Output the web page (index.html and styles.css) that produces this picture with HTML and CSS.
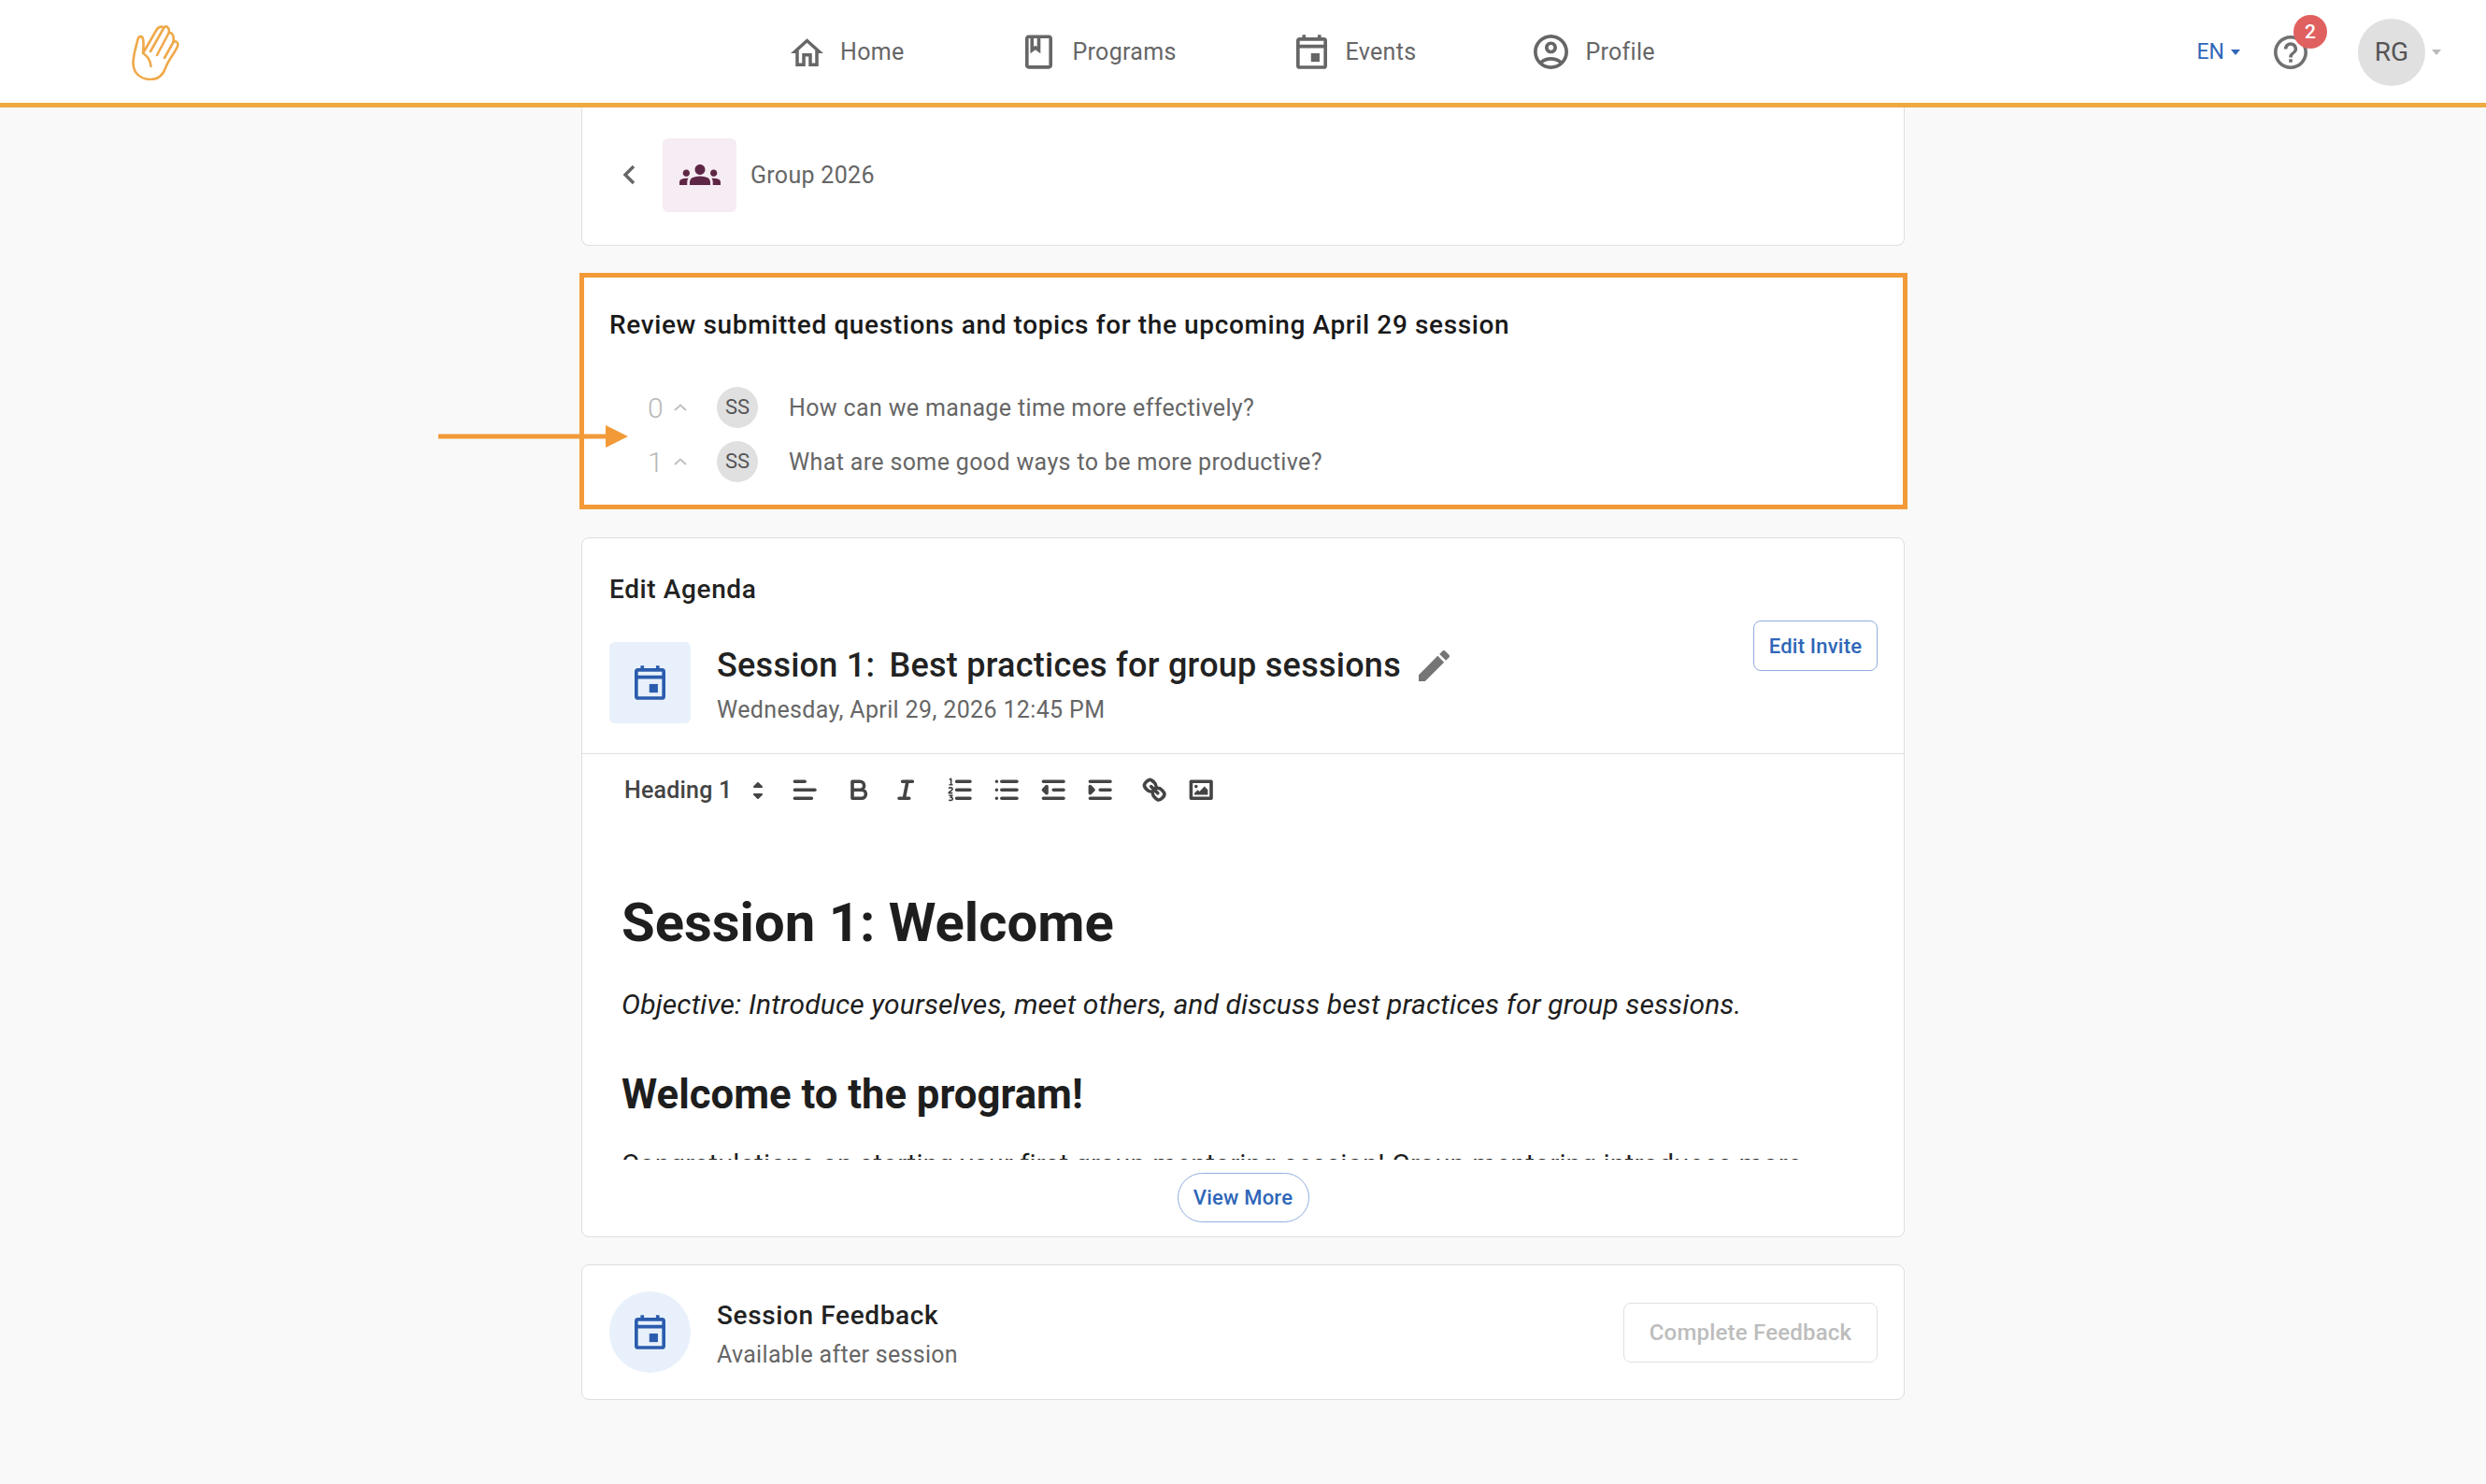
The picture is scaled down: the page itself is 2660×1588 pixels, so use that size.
FILE: index.html
```html
<!DOCTYPE html>
<html lang="en">
<head>
    <meta charset="UTF-8">
    <meta name="viewport" content="width=device-width, initial-scale=1.0">
    <title>Group 2026</title>
    <link rel="stylesheet" href="styles.css">
</head>
<body>
    <svg class="defs" width="0" height="0">
        <symbol id="cal" viewBox="3 1 18 20">
            <g fill="none" stroke="currentColor" stroke-width="2">
                <rect x="4" y="3.6" width="16" height="16.4" rx="1"/>
                <path d="M4 7.8h16M7.5 1v3M16.5 1v3"/>
            </g>
            <rect x="11.6" y="11.8" width="5" height="5" fill="currentColor"/>
        </symbol>
    </svg>

    <header class="topbar">
        <svg class="logo" viewBox="0 0 51 59" fill="none" stroke="currentColor" stroke-width="2.6" stroke-linecap="round" stroke-linejoin="round">
            <path d="M12 30C12.500 24 13 18 12 14.500C11 11 7.500 11.500 6.500 15C5 22 1.300 32 1.500 41C2 52 10 58 20 58C29 58 33.500 53 36 46C39 37 46 30 49 22.500C50.500 18 46 15.500 44 19L35 35M44 19C46 13 43.500 6.500 39.500 8.500L27 32M39.500 8.500C41 3 37 -0.500 34.500 2.500L20 28M34.500 2.500C31 0.500 28 2.500 26.500 5L12 30C17 33 20 38 20.500 44"/>
        </svg>
        <nav class="nav">
            <a class="nav-item">
                <svg class="nav-home" viewBox="2 3 20 17" fill="currentColor"><path d="M12 5.690l5 4.500V18h-2v-6H9v6H7v-7.810l5-4.500M12 3L2 12h3v8h6v-6h2v6h6v-8h3L12 3z"/></svg>
                <span>Home</span>
            </a>
            <a class="nav-item">
                <svg class="nav-book" viewBox="4 2 16 20" fill="currentColor"><path d="M18 2H6c-1.100 0-2 .9-2 2v16c0 1.100.9 2 2 2h12c1.100 0 2-.9 2-2V4c0-1.100-.9-2-2-2zM9 4h2v5l-1-.75L9 9V4zm9 16H6V4h1v9l3-2.250L13 13V4h5v16z"/></svg>
                <span>Programs</span>
            </a>
            <a class="nav-item">
                <svg class="nav-cal"><use href="#cal"/></svg>
                <span>Events</span>
            </a>
            <a class="nav-item">
                <svg class="nav-user" viewBox="2 2 20 20" fill="currentColor"><path d="M12 2C6.480 2 2 6.480 2 12s4.480 10 10 10 10-4.480 10-10S17.520 2 12 2zM7.350 18.500C8.660 17.560 10.260 17 12 17s3.340.56 4.650 1.500c-1.310.94-2.910 1.500-4.650 1.500s-3.340-.56-4.650-1.500zm10.790-1.380C16.450 15.800 14.320 15 12 15s-4.450.8-6.140 2.120C4.700 15.730 4 13.950 4 12c0-4.420 3.580-8 8-8s8 3.580 8 8c0 1.950-.7 3.730-1.860 5.120z"/><path d="M12 6c-1.930 0-3.500 1.570-3.500 3.500S10.070 13 12 13s3.500-1.570 3.500-3.500S13.930 6 12 6zm0 5c-.83 0-1.500-.67-1.500-1.500S11.170 8 12 8s1.500.67 1.500 1.500S12.830 11 12 11z"/></svg>
                <span>Profile</span>
            </a>
        </nav>
        <div class="top-right">
            <span class="lang">EN</span>
            <span class="caret caret-blue"></span>
            <div class="help">
                <svg viewBox="2 2 20 20" fill="currentColor"><path d="M11 18h2v-2h-2v2zm1-16C6.480 2 2 6.480 2 12s4.480 10 10 10 10-4.480 10-10S17.520 2 12 2zm0 18c-4.410 0-8-3.590-8-8s3.590-8 8-8 8 3.590 8 8-3.590 8-8 8zm0-14c-2.210 0-4 1.790-4 4h2c0-1.100.9-2 2-2s2 .9 2 2c0 2-3 1.750-3 5h2c0-2.250 3-2.500 3-5 0-2.210-1.790-4-4-4z"/></svg>
                <span class="badge">2</span>
            </div>
            <div class="avatar-lg">RG</div>
            <span class="caret"></span>
        </div>
    </header>

    <main class="page">
        <section class="card group-card">
            <svg class="back" viewBox="0 0 14 22" fill="none" stroke="currentColor" stroke-width="3.400"><path d="M12 2L3 11l9 9"/></svg>
            <div class="group-icon">
                <svg viewBox="0 6 24 12" fill="currentColor"><path d="M12 12.750c1.630 0 3.070.39 4.240.9 1.080.48 1.760 1.560 1.760 2.730V18H6v-1.610c0-1.180.68-2.260 1.760-2.730 1.170-.52 2.610-.91 4.240-.91zM4 13c1.100 0 2-.9 2-2s-.9-2-2-2-2 .9-2 2 .9 2 2 2zm1.130 1.100c-.37-.06-.74-.1-1.130-.1-.99 0-1.930.21-2.780.58C.48 14.900 0 15.620 0 16.430V18h4.500v-1.610c0-.83.23-1.610.63-2.290zM20 13c1.100 0 2-.9 2-2s-.9-2-2-2-2 .9-2 2 .9 2 2 2zm4 3.430c0-.81-.48-1.530-1.220-1.850-.85-.37-1.790-.58-2.780-.58-.39 0-.76.04-1.130.1.4.68.63 1.460.63 2.290V18H24v-1.570zM12 6c1.660 0 3 1.340 3 3s-1.340 3-3 3-3-1.340-3-3 1.340-3 3-3z"/></svg>
            </div>
            <span class="group-name">Group 2026</span>
        </section>

        <section class="review">
            <h2 class="review-title">Review submitted questions and topics for the upcoming April 29 session</h2>
            <div class="question">
                <span class="votes">0</span>
                <span class="vote-up"><svg viewBox="0 0 14 8" fill="none" stroke="currentColor" stroke-width="2"><path d="M1 7l6-5.500L13 7"/></svg></span>
                <span class="avatar-sm">SS</span>
                <span class="question-text">How can we manage time more effectively?</span>
            </div>
            <div class="question">
                <span class="votes">1</span>
                <span class="vote-up"><svg viewBox="0 0 14 8" fill="none" stroke="currentColor" stroke-width="2"><path d="M1 7l6-5.500L13 7"/></svg></span>
                <span class="avatar-sm">SS</span>
                <span class="question-text">What are some good ways to be more productive?</span>
            </div>
            <svg class="arrow" viewBox="0 0 203 24" fill="currentColor"><path d="M0 9.500h179V0l24 12-24 12v-9.500H0z"/></svg>
        </section>

        <section class="card agenda">
            <div class="agenda-head">
                <div class="agenda-left">
                    <h3 class="agenda-label">Edit Agenda</h3>
                    <div class="session">
                        <div class="session-icon"><svg class="cal-blue"><use href="#cal"/></svg></div>
                        <div>
                            <div class="session-title">
                                <span><span class="session-no">Session 1:</span> Best practices for group sessions</span>
                                <svg class="pencil" viewBox="3 3 18 18" fill="currentColor"><path d="M3 17.250V21h3.750L17.810 9.940l-3.750-3.750L3 17.250zM20.710 7.040c.39-.39.39-1.020 0-1.410l-2.340-2.340c-.39-.39-1.020-.39-1.410 0l-1.830 1.830 3.750 3.750 1.830-1.830z"/></svg>
                            </div>
                            <div class="session-date">Wednesday, April 29, 2026 12:45 PM</div>
                        </div>
                    </div>
                </div>
                <button class="btn btn-invite">Edit Invite</button>
            </div>

            <div class="toolbar">
                <span class="picker">Heading 1</span>
                <svg class="picker-arrows" viewBox="6.500 4.500 5 9" fill="currentColor" stroke="currentColor" stroke-linejoin="round"><path d="M7 11l2 2 2-2zM7 7l2-2 2 2z"/></svg>
                <span class="tool-group">
                    <button class="tool"><svg viewBox="0 0 18 18"><path d="M3 9h12M3 14h10M3 4h6"/></svg></button>
                </span>
                <span class="tool-group">
                    <button class="tool"><svg viewBox="0 0 18 18"><path d="M5 4h4.500a2.500 2.500 0 0 1 0 5H5zM5 9h5.500a2.500 2.500 0 0 1 0 5H5z"/></svg></button>
                    <button class="tool"><svg viewBox="0 0 18 18"><path d="M7 4h6M5 14h6M8 14l2-10"/></svg></button>
                </span>
                <span class="tool-group">
                    <button class="tool"><svg viewBox="0 0 18 18"><path d="M7 4h8M7 9h8M7 14h8"/><g class="thin"><path d="M2.700 3l1-.6v3.600M2.500 6h2.200M2.300 8.200c.5-.8 2.300-.6 2.200.4 0 .8-1.800 1.300-2.200 2.300h2.300M2.400 12.400h2l-1 1.100c1 0 1.300.5 1.200 1-.1.800-1.600 1-2.200.4"/></g></svg></button>
                    <button class="tool"><svg viewBox="0 0 18 18"><path d="M6 4h9M6 9h9M6 14h9M3 4h0M3 9h0M3 14h0"/></svg></button>
                    <button class="tool"><svg viewBox="0 0 18 18"><path d="M3 14h12M3 4h12M9 9h6"/><path class="solid" d="M5 7v4L3 9z"/></svg></button>
                    <button class="tool"><svg viewBox="0 0 18 18"><path d="M3 14h12M3 4h12M9 9h6"/><path class="solid" d="M3 7v4l2-2z"/></svg></button>
                </span>
                <span class="tool-group">
                    <button class="tool"><svg viewBox="0 0 18 18"><path d="M7 7l4 4"/><path d="M8.900 4.577a3.476 3.476 0 0 1 .36 4.679A3.476 3.476 0 0 1 4.577 8.900C3.185 7.500 2.035 6.400 4.217 4.217S7.500 3.185 8.900 4.577Z"/><path d="M13.423 9.100a3.476 3.476 0 0 0-4.679-.36 3.476 3.476 0 0 0 .36 4.679c1.392 1.392 2.500 2.542 4.679.36S14.815 10.500 13.423 9.100Z"/></svg></button>
                    <button class="tool"><svg viewBox="0 0 18 18"><rect x="3" y="4" width="12" height="10"/><circle class="solid-dot" cx="6" cy="7" r="1"/><path class="fill-only" d="M5 12v-1l2-2 1 1 3-3 2 2v3z"/></svg></button>
                </span>
            </div>

            <div class="editor">
                <h1>Session 1: Welcome</h1>
                <p class="objective"><em>Objective: Introduce yourselves, meet others, and discuss best practices for group sessions.</em></p>
                <h2>Welcome to the program!</h2>
                <p class="intro">Congratulations on starting your first group mentoring session! Group mentoring introduces more</p>
            </div>
            <div class="view-more"><button class="btn btn-more">View More</button></div>
        </section>

        <section class="card feedback">
            <div class="feedback-icon"><svg class="cal-blue"><use href="#cal"/></svg></div>
            <div class="feedback-text">
                <div class="feedback-title">Session Feedback</div>
                <div class="feedback-sub">Available after session</div>
            </div>
            <button class="btn btn-disabled">Complete Feedback</button>
        </section>
    </main>
</body>
</html>
```

FILE: styles.css
```css
* {
    box-sizing: border-box;
}
body {
    margin: 0;
    height: 1588px;
    overflow: hidden;
    background: #f9f9f9;
    font-family: Roboto, "Noto Sans", sans-serif;
    color: #666;
}
.defs {
    display: block;
    height: 0;
}
button {
    font-family: inherit;
    background: #fff;
}

/* top bar */
.topbar {
    display: flex;
    align-items: center;
    height: 115px;
    padding: 1px 48px 0 141px;
    background: #fff;
    border-bottom: 5px solid #eea942;
}
.logo {
    width: 51px;
    height: 59px;
    margin-top: 2px;
    color: #efa94a;
}
.nav {
    display: flex;
    align-items: center;
    margin-left: 654px;
}
.nav-item {
    display: flex;
    align-items: center;
    gap: 18px;
    margin-right: 128px;
    font-size: 25px;
    letter-spacing: 0.3px;
    color: #666;
}
.nav-item:first-child {
    margin-right: 130px;
}
.nav-item:nth-child(3) {
    margin-right: 126px;
}
.nav-home {
    width: 35px;
    height: 30px;
}
.nav-book {
    width: 29px;
    height: 37px;
    margin-right: 3px;
}
.nav-cal {
    width: 33px;
    height: 37px;
    margin-right: 2px;
}
.nav-user {
    width: 37px;
    height: 37px;
}
.top-right {
    display: flex;
    align-items: center;
    margin-left: auto;
}
.lang {
    font-size: 23px;
    color: #2f66b8;
}
.caret {
    width: 0;
    height: 0;
    margin-left: 7px;
    border: 5px solid transparent;
    border-top: 6px solid #bbb;
    border-bottom: 0;
}
.caret-blue {
    border-top-color: #2f66b8;
}
.help {
    position: relative;
    width: 36px;
    height: 36px;
    margin: 0 54px 0 36px;
    color: #707070;
}
.help svg {
    display: block;
    width: 36px;
    height: 36px;
}
.badge {
    position: absolute;
    top: -22px;
    left: 21px;
    width: 36px;
    height: 36px;
    border-radius: 50%;
    background: #e06060;
    color: #fff;
    font-size: 21px;
    font-weight: 500;
    line-height: 36px;
    text-align: center;
}
.avatar-lg {
    width: 72px;
    height: 72px;
    border-radius: 50%;
    background: #e0e0e0;
    color: #555;
    font-size: 28px;
    line-height: 72px;
    text-align: center;
}

/* cards */
.page {
    display: flex;
    flex-direction: column;
    width: 1416px;
    margin: 0 auto;
}
.card {
    background: #fff;
    border: 1px solid #dedede;
    border-radius: 8px;
}
.group-card {
    display: flex;
    align-items: center;
    height: 148px;
    padding: 0 0 3px 43px;
    border-top: 0;
    border-radius: 0 0 8px 8px;
}
.back {
    width: 14px;
    height: 22px;
    color: #666;
}
.group-icon {
    display: flex;
    align-items: center;
    justify-content: center;
    width: 79px;
    height: 79px;
    margin: 0 15px 0 29px;
    border-radius: 6px;
    background: #f6ecf4;
    color: #5f2746;
}
.group-icon svg {
    width: 44px;
    height: 22px;
}
.group-name {
    font-size: 25px;
    letter-spacing: 0.3px;
}

/* questions box with the orange annotation */
.review {
    position: relative;
    height: 253px;
    margin: 29px -3px 30px -2px;
    padding: 34px 27px 0;
    background: #fff;
    border: 5px solid #f29a38;
}
.review-title {
    margin: 0 0 49px;
    font-size: 28px;
    font-weight: 500;
    letter-spacing: 0.62px;
    line-height: 34px;
    color: #1a1a1a;
}
.question {
    display: flex;
    align-items: center;
    height: 44px;
    margin-bottom: 14px;
    padding-left: 41px;
}
.votes {
    width: 28px;
    font-size: 30px;
    font-weight: 300;
    color: #b8b8b8;
}
.vote-up {
    display: flex;
    width: 46px;
    color: #c0c0c0;
}
.vote-up svg {
    width: 14px;
    height: 8px;
}
.avatar-sm {
    width: 44px;
    height: 44px;
    margin-right: 33px;
    border-radius: 50%;
    background: #e0e0e0;
    color: #555;
    font-size: 22px;
    line-height: 44px;
    text-align: center;
}
.question-text {
    font-size: 25px;
    letter-spacing: 0.36px;
}
.arrow {
    position: absolute;
    left: -156px;
    top: 158px;
    width: 203px;
    height: 24px;
    color: #f29a38;
}

/* agenda */
.agenda {
    height: 749px;
}
.agenda-head {
    display: flex;
    justify-content: space-between;
    height: 231px;
    padding: 0 28px 0 29px;
    border-bottom: 1px solid #e0e0e0;
}
.agenda-label {
    margin: 0 0 41px;
    padding-top: 40px;
    font-size: 28px;
    font-weight: 500;
    letter-spacing: 0.62px;
    line-height: 30px;
    color: #222;
}
.session {
    display: flex;
    gap: 28px;
}
.session-icon {
    display: flex;
    align-items: center;
    justify-content: center;
    width: 87px;
    height: 87px;
    border-radius: 6px;
    background: #e8f1fb;
}
.cal-blue {
    width: 33px;
    height: 37px;
    color: #2b5cad;
}
.session-title {
    display: flex;
    align-items: center;
    gap: 19px;
    height: 50px;
    font-size: 36px;
    font-weight: 500;
    letter-spacing: 0.26px;
    color: #222;
}
.session-no {
    margin-right: 6px;
}
.pencil {
    width: 33px;
    height: 33px;
    color: #757575;
}
.session-date {
    margin-top: 8px;
    font-size: 25px;
    letter-spacing: 0.36px;
}
.btn {
    height: 54px;
    border: 1px solid #8fade0;
    border-radius: 8px;
    color: #2f66b8;
    font-size: 22px;
    font-weight: 500;
    letter-spacing: 0.2px;
}
.btn-invite {
    width: 133px;
    margin-top: 88px;
    padding: 0;
}
.toolbar {
    display: flex;
    align-items: center;
    height: 76px;
    padding: 1px 0 0 45px;
    color: #444;
}
.picker {
    font-size: 25px;
    font-weight: 500;
    letter-spacing: 0.2px;
}
.picker-arrows {
    width: 10px;
    height: 18px;
    margin: 0 20px 0 22.500px;
}
.tool-group {
    display: flex;
    margin-right: 8px;
}
.tool {
    display: flex;
    align-items: center;
    justify-content: center;
    width: 50px;
    height: 44px;
    padding: 0;
    border: 0;
}
.tool svg {
    width: 32.400px;
    height: 32.400px;
    fill: none;
    stroke: #444;
    stroke-width: 2;
    stroke-linecap: round;
    stroke-linejoin: round;
}
.tool .thin {
    stroke-width: 0.9;
    stroke-linecap: butt;
}
.tool .solid {
    fill: #444;
}
.tool .solid-dot,
.tool .fill-only {
    fill: #444;
    stroke: none;
}
.editor {
    height: 358px;
    padding: 0 42px;
    overflow: hidden;
    color: #1e1e1e;
}
.editor h1 {
    margin: 65px 0 0;
    font-size: 58px;
    font-weight: 700;
    line-height: 78px;
}
.editor h2 {
    margin: 46px 0 0;
    font-size: 43.700px;
    font-weight: 700;
    line-height: 56px;
}
.editor p {
    margin: 0;
    font-size: 30px;
    letter-spacing: 0.13px;
    line-height: 44px;
    white-space: nowrap;
}
.editor .objective {
    margin-top: 27px;
}
.editor .intro {
    margin-top: 25px;
    font-size: 29px;
}
.view-more {
    display: flex;
    justify-content: center;
    margin-top: 14px;
}
.btn-more {
    width: 141px;
    height: 53px;
    padding: 0;
    border-radius: 27px;
}

/* feedback */
.feedback {
    display: flex;
    align-items: center;
    gap: 28px;
    height: 145px;
    margin-top: 29px;
    padding: 0 28px 0 29px;
}
.feedback-icon {
    display: flex;
    align-items: center;
    justify-content: center;
    width: 87px;
    height: 87px;
    border-radius: 50%;
    background: #e8f1fb;
}
.feedback-text {
    padding-top: 4px;
}
.feedback-title {
    font-size: 28px;
    font-weight: 500;
    letter-spacing: 0.62px;
    line-height: 34px;
    color: #222;
}
.feedback-sub {
    margin-top: 10px;
    font-size: 25px;
    letter-spacing: 0.3px;
}
.btn-disabled {
    width: 272px;
    height: 64px;
    margin-left: auto;
    padding: 0;
    border-color: #e0e0e0;
    color: #bdbdbd;
    font-size: 24px;
}
```
